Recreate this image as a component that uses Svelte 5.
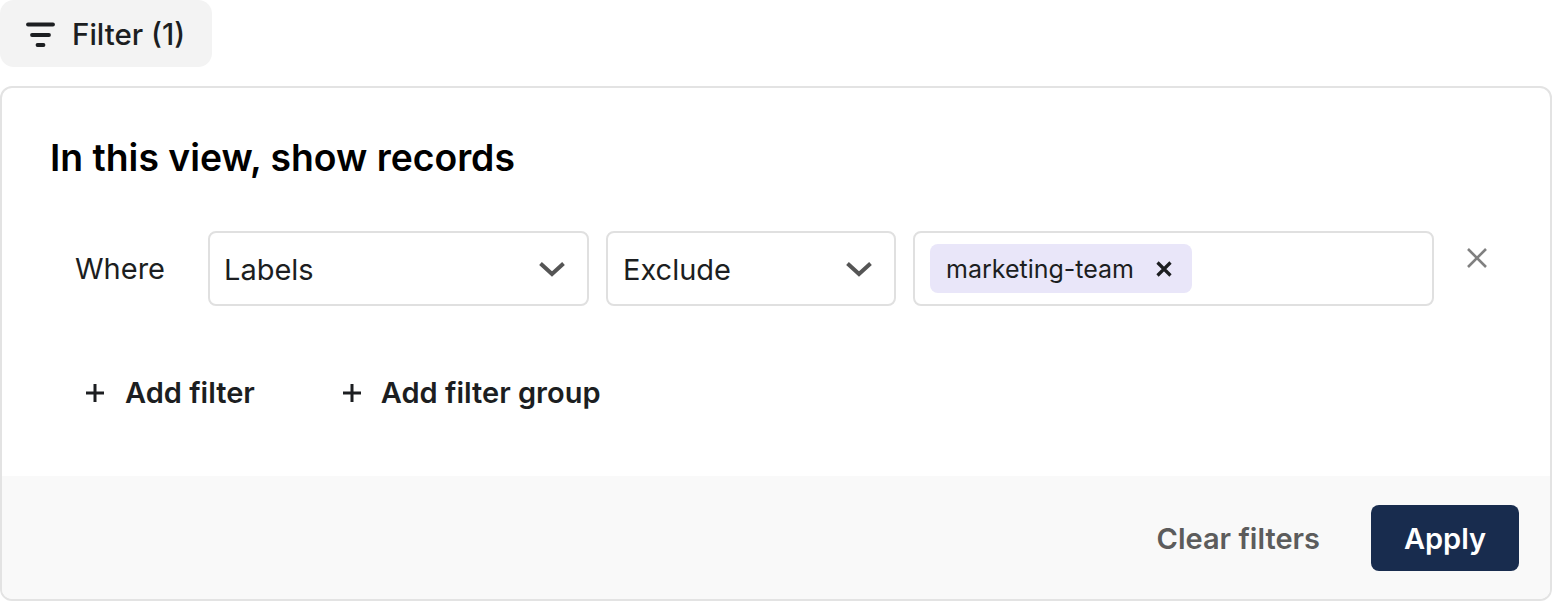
<script>
  let filters = [{ field: "Labels", op: "Exclude", tags: ["marketing-team"] }];
</script>

<div class="page">
  <button class="filter-btn">
    <svg width="30" height="30" viewBox="0 0 30 30" fill="none" stroke="#1c1e21" stroke-width="3.8" stroke-linecap="round">
      <path d="M3 5.5H28" />
      <path d="M7 16H24" />
      <path d="M12.5 26H18.5" />
    </svg>
    <span>Filter (1)</span>
  </button>

  <section class="card">
    <div class="body">
      <h2>In this view, show records</h2>

      {#each filters as f}
        <div class="row">
          <span class="where">Where</span>
          <div class="select labels">
            <span>{f.field}</span>
            <svg class="chev" width="26" height="16" viewBox="0 0 26 16" fill="none" stroke="#555" stroke-width="4">
              <path d="M1.5 2.5L13 13L24.5 2.5" />
            </svg>
          </div>
          <div class="select op">
            <span>{f.op}</span>
            <svg class="chev" width="26" height="16" viewBox="0 0 26 16" fill="none" stroke="#555" stroke-width="4">
              <path d="M1.5 2.5L13 13L24.5 2.5" />
            </svg>
          </div>
          <div class="tags">
            {#each f.tags as t}
              <span class="chip">
                {t}
                <svg width="16" height="16" viewBox="0 0 16 16" stroke="#1c1e21" stroke-width="3.2">
                  <path d="M1.5 1.5L14.5 14.5M14.5 1.5L1.5 14.5" />
                </svg>
              </span>
            {/each}
          </div>
          <svg class="remove" width="20" height="20" viewBox="0 0 20 20" stroke="#808080" stroke-width="2.6">
            <path d="M1 1L19 19M19 1L1 19" />
          </svg>
        </div>
      {/each}

      <div class="adds">
        <button class="add">
          <svg width="20" height="20" viewBox="0 0 20 20" stroke="#1c1e21" stroke-width="3">
            <path d="M10 1V19M1 10H19" />
          </svg>
          <span>Add filter</span>
        </button>
        <button class="add">
          <svg width="20" height="20" viewBox="0 0 20 20" stroke="#1c1e21" stroke-width="3">
            <path d="M10 1V19M1 10H19" />
          </svg>
          <span>Add filter group</span>
        </button>
      </div>
    </div>

    <footer>
      <button class="clear">Clear filters</button>
      <button class="apply">Apply</button>
    </footer>
  </section>
</div>

<style>
  :global(body) {
    background: #fff;
  }
  .page {
    width: 1553px;
    height: 601px;
    overflow: hidden;
    font-family: Inter, "Liberation Sans", sans-serif;
    color: #1c1e21;
  }
  button {
    font-family: inherit;
    border: none;
    background: none;
    padding: 0;
    color: inherit;
  }
  .filter-btn {
    display: flex;
    align-items: center;
    gap: 17px;
    width: 212px;
    height: 67px;
    padding-left: 25px;
    box-sizing: border-box;
    background: #f3f3f3;
    border-radius: 14px;
    font-size: 29.5px;
    font-weight: 500;
  }
  .filter-btn span {
    margin-top: 1px;
  }
  .card {
    box-sizing: border-box;
    width: 1552px;
    height: 515px;
    margin-top: 19px;
    border: 2px solid #e3e3e3;
    border-radius: 12px;
    overflow: hidden;
    display: flex;
    flex-direction: column;
  }
  .body {
    flex: 1;
    padding: 48px 0 0 48px;
  }
  h2 {
    margin: 0;
    font-size: 37.3px;
    line-height: 44px;
    font-weight: 600;
    color: #000;
  }
  .row {
    display: flex;
    align-items: flex-start;
    margin-top: 51px;
    padding-left: 25px;
    font-size: 29px;
  }
  .where {
    width: 133px;
    line-height: 76px;
  }
  .select,
  .tags {
    box-sizing: border-box;
    height: 75px;
    border: 2px solid #e0e0e0;
    border-radius: 8px;
    display: flex;
    align-items: center;
  }
  .select {
    justify-content: space-between;
    padding: 0 22px 0 15px;
    margin-right: 17px;
  }
  .select span {
    margin-top: 1px;
  }
  .labels span {
    margin-left: -1px;
  }
  .labels {
    width: 381px;
  }
  .op {
    width: 290px;
  }
  .tags {
    width: 521px;
    padding-left: 15px;
  }
  .chip {
    display: flex;
    align-items: center;
    gap: 22px;
    height: 49px;
    padding: 0 20px 0 16px;
    background: #e9e6f9;
    border-radius: 8px;
    font-size: 25px;
  }
  .remove {
    margin: 17px 0 0 33px;
  }
  .adds {
    display: flex;
    gap: 87px;
    margin-top: 67px;
    padding-left: 35px;
  }
  .add {
    display: flex;
    align-items: center;
    gap: 20px;
    font-size: 29px;
    font-weight: 600;
    line-height: 36px;
  }
  .add span {
    margin-top: 1px;
  }
  .add + .add {
    gap: 19px;
  }
  footer {
    height: 123px;
    background: #f9f9f9;
    display: flex;
    align-items: center;
    justify-content: flex-end;
    gap: 51px;
    padding: 0 31px 0 0;
    box-sizing: border-box;
  }
  .clear {
    font-size: 29px;
    font-weight: 600;
    color: #5c5c5c;
    padding-top: 2px;
  }
  .apply {
    width: 148px;
    height: 66px;
    background: #182c4e;
    color: #fff;
    border-radius: 8px;
    font-size: 29px;
    font-weight: 600;
    padding-top: 2px;
  }
</style>
